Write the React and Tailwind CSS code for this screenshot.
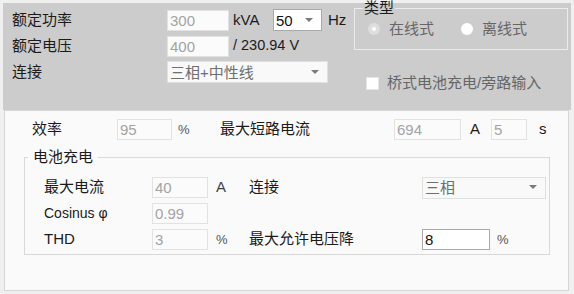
import React from 'react'

const font = "font-['Liberation_Sans','Noto_Sans_CJK_SC',sans-serif]"

function Arrow() {
    return (
        <svg width="8" height="5" viewBox="0 0 8 5" className="shrink-0">
            <polygon points="0,0 8,0 4,4" fill="#7a7a7a" />
        </svg>
    )
}

function Field({ value, width, active }) {
    return (
        <div
            className={`${width} h-[21px] flex items-center pl-[2px] text-[15px] leading-none ${
                active
                    ? "bg-white border border-[#a9a9a9] text-[#111]"
                    : "bg-[#fbfbfb] border border-[#e2e2e2] text-[#a3a3a3]"
            }`}
        >
            {value}
        </div>
    )
}

function Select({ value, width, active }) {
    return (
        <div
            className={`${width} h-[22px] flex items-center justify-between pl-[2px] pr-[8px] text-[15px] leading-none ${
                active
                    ? "bg-white border border-[#a9a9a9] text-[#111]"
                    : "bg-[#f9f9f9] border border-[#e0e0e0] text-[#6f6f6f]"
            }`}
        >
            <span>{value}</span>
            <Arrow />
        </div>
    )
}

export default function App() {
    return (
        <div className={`${font} w-[574px] h-[294px] bg-[#f0f0f0] pt-[3px] px-[3px] text-[#1b1b1b] text-[15px] overflow-hidden`}>
            {/* <!-- top band --> */}
            <div className="h-[107px] bg-[#cccccc] flex pt-[6px] pl-[9px] pr-[3px]">
                <div className="flex flex-col gap-[4px]">
                    <div className="flex items-center h-[22px]">
                        <span className="w-[155px]">额定功率</span>
                        <Field value="300" width="w-[62px]" />
                        <span className="w-[44px] pl-[4px]">kVA</span>
                        <Select value="50" width="w-[49px]" active />
                        <span className="ml-[6px]">Hz</span>
                    </div>
                    <div className="flex items-center h-[22px]">
                        <span className="w-[155px]">额定电压</span>
                        <Field value="400" width="w-[62px]" />
                        <span className="pl-[4px] text-[14.5px]">/ 230.94 V</span>
                    </div>
                    <div className="flex items-center h-[22px]">
                        <span className="w-[155px]">连接</span>
                        <Select value="三相+中性线" width="w-[161px]" />
                    </div>
                </div>

                <div className="ml-auto mt-[-7px] w-[214px] flex flex-col">
                    <fieldset className="h-[48px] border border-[#ececec] px-[13px]">
                        <legend className="ml-[-5px] px-[1px] text-[15px] leading-[12px]">类型</legend>
                        <div className="flex items-center h-[16px] mt-[7px] text-[#666]">
                            <span className="w-[12px] h-[12px] rounded-full bg-[#dedede] flex items-center justify-center">
                                <span className="w-[4px] h-[4px] rounded-full bg-white"></span>
                            </span>
                            <span className="ml-[9px]">在线式</span>
                            <span className="ml-[27px] w-[12px] h-[12px] rounded-full bg-white"></span>
                            <span className="ml-[9px]">离线式</span>
                        </div>
                    </fieldset>
                    <div className="flex items-center mt-[22px] ml-[12px] text-[#666]">
                        <span className="w-[13px] h-[13px] bg-white border border-[#e6e6e6]"></span>
                        <span className="ml-[8px]">桥式电池充电/旁路输入</span>
                    </div>
                </div>
            </div>

            {/* <!-- bottom panel --> */}
            <div className="ml-[1px] mr-[2px] h-[181px] bg-[#fafafa] border border-[#d6d6d6] pt-[8px]">
                <div className="flex items-center h-[21px] pl-[27px]">
                    <span className="w-[85px]">效率</span>
                    <Field value="95" width="w-[55px]" />
                    <span className="w-[48px] pl-[6px] text-[13px] text-[#555]">%</span>
                    <span className="w-[174px]">最大短路电流</span>
                    <Field value="694" width="w-[67px]" />
                    <span className="w-[30px] pl-[9px]">A</span>
                    <Field value="5" width="w-[36px]" />
                    <span className="pl-[12px]">s</span>
                </div>

                <fieldset className="ml-[19px] mr-[18px] mt-[7px] h-[108px] border border-[#d9d9d9] pl-[19px]">
                    <legend className="ml-[-16px] px-[5px] leading-[20px]">电池充电</legend>
                    <div className="flex flex-col gap-[5px] pt-[10px]">
                        <div className="flex items-center h-[21px]">
                            <span className="w-[108px]">最大电流</span>
                            <Field value="40" width="w-[56px]" />
                            <span className="w-[41px] pl-[8px] text-[#444]">A</span>
                            <span className="w-[173px]">连接</span>
                            <Select value="三相" width="w-[124px]" />
                        </div>
                        <div className="flex items-center h-[21px]">
                            <span className="w-[108px] text-[14px]">Cosinus φ</span>
                            <Field value="0.99" width="w-[56px]" />
                        </div>
                        <div className="flex items-center h-[21px]">
                            <span className="w-[108px]">THD</span>
                            <Field value="3" width="w-[56px]" />
                            <span className="w-[41px] pl-[8px] text-[13px] text-[#555]">%</span>
                            <span className="w-[173px]">最大允许电压降</span>
                            <Field value="8" width="w-[68px]" active />
                            <span className="pl-[7px] text-[13px] text-[#555]">%</span>
                        </div>
                    </div>
                </fieldset>
            </div>
        </div>
    )
}
